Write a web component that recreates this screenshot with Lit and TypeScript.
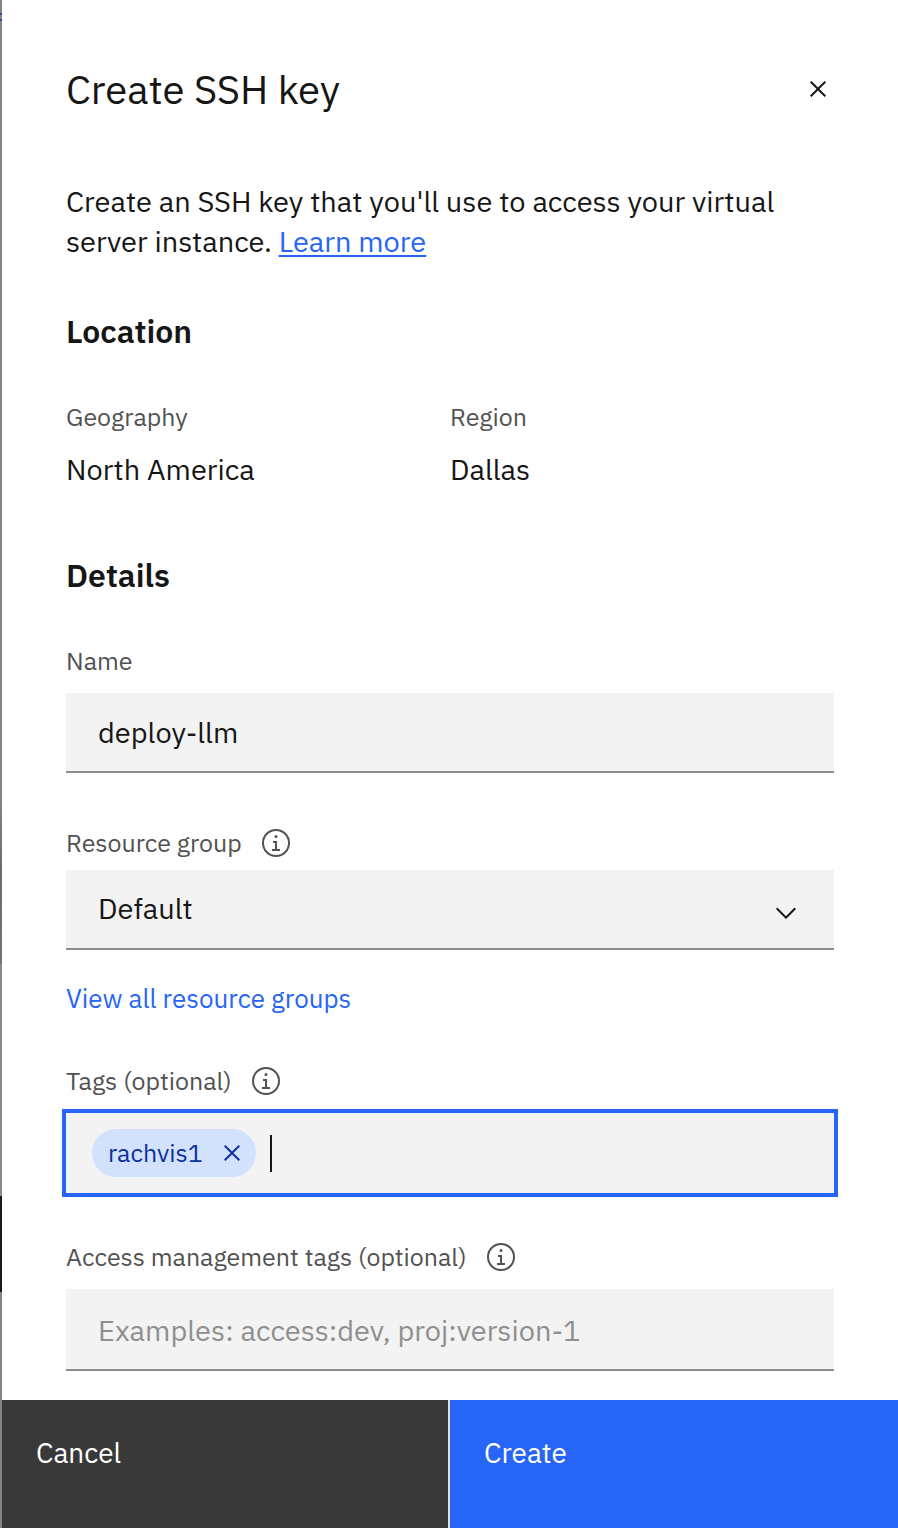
import { LitElement, html, css } from "lit";
import { customElement, state } from "lit/decorators.js";

const info = html`<svg viewBox="0 0 32 32" aria-hidden="true">
  <path d="M17 22v-8h-4v2h2v6h-3v2h8v-2zM16 8a1.5 1.5 0 1 0 0 3 1.5 1.5 0 0 0 0-3z"/>
  <path d="M16 30a14 14 0 1 1 0-28 14 14 0 0 1 0 28zm0-26a12 12 0 1 0 0 24 12 12 0 0 0 0-24z"/>
</svg>`;
const cross = html`<svg viewBox="0 0 32 32" aria-hidden="true">
  <path d="M24 9.4 22.6 8 16 14.6 9.4 8 8 9.4l6.6 6.6L8 22.6 9.4 24l6.6-6.6 6.6 6.6 1.4-1.4-6.6-6.6z"/>
</svg>`;
const chevron = html`<svg class="chevron" viewBox="0 0 32 32" aria-hidden="true">
  <path d="M16 22 6 12l1.4-1.4 8.6 8.6 8.6-8.6L26 12z"/>
</svg>`;

@customElement("app-root")
class AppRoot extends LitElement {
  @state() tags = ["rachvis1"];

  static styles = css`
    :host {
      display: block;
      font-family: "IBM Plex Sans", "Noto Sans", sans-serif;
      color: #161616;
      font-size: 29px;
      line-height: 40px;
    }
    * { box-sizing: border-box; }
    h1, h2, p, dl, dd { margin: 0; }
    button, input, select { font: inherit; color: inherit; border: 0; border-radius: 0; outline: 0; background: none; padding: 0; margin: 0; }
    button { cursor: pointer; }
    svg { display: block; width: 32px; height: 32px; fill: currentColor; }

    .page { min-height: 100vh; display: grid; grid-template-columns: 2px minmax(0, 1fr); background: #fff; }
    /* sliver of the dimmed page behind the panel */
    .backdrop {
      background: linear-gradient(
        #848484 13px, #2a4bb0 13px 15px, #848484 15px 19px, #2a4bb0 19px 21px,
        #848484 21px 800px, #6c6c6c 870px, #747474 964px, #8a8a8a 964px 1196px,
        #1c1c1c 1196px 1292px, #848484 1292px);
    }
    .panel { display: flex; flex-direction: column; }
    .content { flex: 1; padding: 61px 64px 29px; }
    header { display: flex; justify-content: space-between; align-items: center; }
    h1 { font-weight: 400; font-size: 40px; line-height: 56px; }
    h2 { font-weight: 600; font-size: 32px; line-height: 44px; margin-bottom: 48px; }
    .intro { margin: 64px 0 48px; }
    a { color: #2765f6; text-decoration-thickness: 2px; text-underline-offset: 3px; }
    .location { display: grid; grid-template-columns: 1fr 1fr; margin-bottom: 64px; }
    dt, label { display: block; font-size: 25px; line-height: 32px; color: #525252; }
    dd { margin-top: 16px; }

    .field + .field { margin-top: 48px; }
    .name + .group { margin-top: 54px; }
    .group + .field { margin-top: 47px; }
    .label { display: flex; align-items: center; gap: 18px; margin-bottom: 16px; color: #525252; }
    .group .label { margin-bottom: 11px; }
    .box { display: block; width: 100%; height: 80px; padding: 0 32px; background: #f3f3f3; border-bottom: 2px solid #8d8d8d; }
    .access .box { height: 82px; padding-top: 2px; }
    .box::placeholder { color: #8f8f8f; opacity: 1; }
    .select { position: relative; }
    .select .box { appearance: none; padding-bottom: 2px; }
    .chevron { position: absolute; right: 32px; top: 27px; pointer-events: none; }
    .manage { margin-top: 28px; font-size: 26px; }
    .manage a { text-decoration: none; }

    .tags { display: flex; align-items: center; height: 80px; padding: 0 26px; background: #f3f3f3; outline: 4px solid #2765f6; }
    .tag { display: flex; align-items: center; gap: 13px; height: 48px; padding: 0 8px 0 16px; border-radius: 24px; background: #d2e2fd; color: #0c30a0; font-size: 25px; }
    .caret { width: 2px; height: 37px; margin-left: 14px; background: #161616; }
    .tags input { flex: 1; min-width: 0; caret-color: transparent; }

    footer { display: grid; grid-template-columns: 1fr 1fr; }
    footer button { height: 128px; padding: 33px 34px; display: flex; align-items: flex-start; color: #fff; font-size: 28px; }
    .cancel { background: #393939; border-right: 2px solid #e0e0e0; }
    .create { background: #2765f6; }
  `;

  private remove(tag: string) {
    this.tags = this.tags.filter((t) => t !== tag);
  }

  render() {
    return html`
      <div class="page">
        <div class="backdrop"></div>
        <div class="panel">
          <div class="content">
            <header>
              <h1>Create SSH key</h1>
              <button aria-label="Close">${cross}</button>
            </header>
            <p class="intro">Create an SSH key that you'll use to access your virtual server instance. <a href="#">Learn more</a></p>

            <h2>Location</h2>
            <dl class="location">
              <div><dt>Geography</dt><dd>North America</dd></div>
              <div><dt>Region</dt><dd>Dallas</dd></div>
            </dl>

            <h2>Details</h2>
            <div class="field name">
              <div class="label"><label for="name">Name</label></div>
              <input id="name" class="box" type="text" .value=${"deploy-llm"}>
            </div>
            <div class="field group">
              <div class="label"><label for="group">Resource group</label>${info}</div>
              <div class="select">
                <select id="group" class="box"><option>Default</option></select>
                ${chevron}
              </div>
              <p class="manage"><a href="#">View all resource groups</a></p>
            </div>
            <div class="field">
              <div class="label"><label for="tags">Tags (optional)</label>${info}</div>
              <div class="tags">
                ${this.tags.map((tag) => html`
                  <span class="tag">${tag}<button aria-label="Remove tag" @click=${() => this.remove(tag)}>${cross}</button></span>`)}
                <span class="caret"></span>
                <input id="tags" type="text">
              </div>
            </div>
            <div class="field access">
              <div class="label"><label for="access">Access management tags (optional)</label>${info}</div>
              <input id="access" class="box" type="text" placeholder="Examples: access:dev, proj:version-1">
            </div>
          </div>
          <footer>
            <button class="cancel">Cancel</button>
            <button class="create">Create</button>
          </footer>
        </div>
      </div>
    `;
  }
}
